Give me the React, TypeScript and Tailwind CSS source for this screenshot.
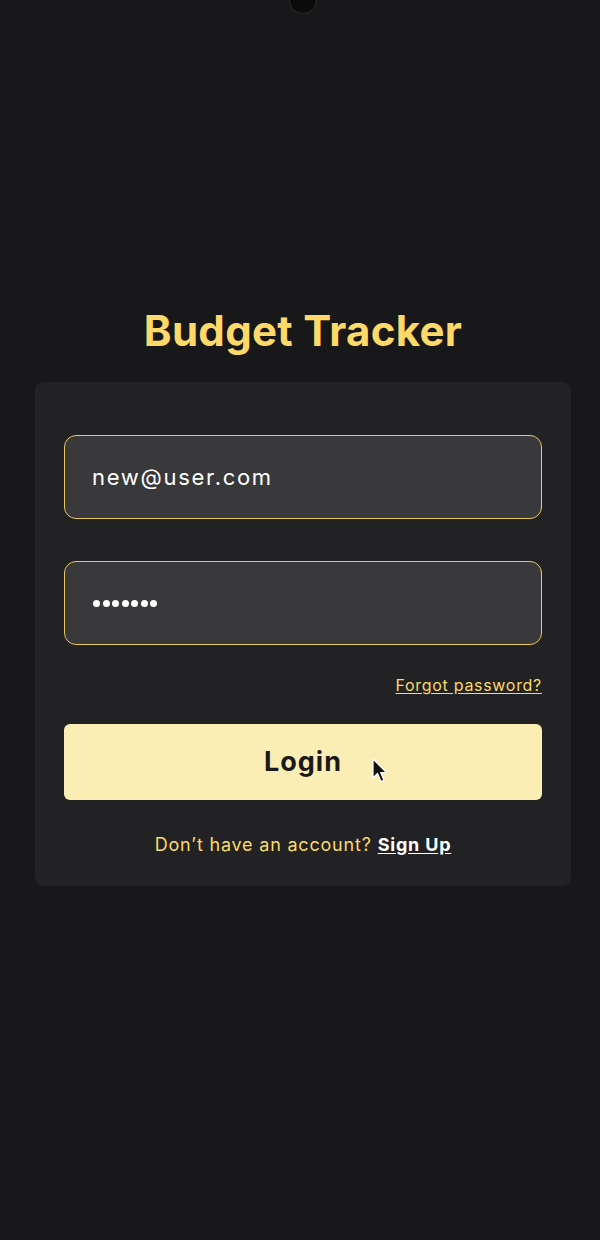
export default function App() {
  const font = { fontFamily: '"Inter", "Liberation Sans", sans-serif' };
  return (
    <div className="relative w-[600px] h-[1240px] bg-[#18171a] overflow-hidden" style={font}>
      {/* camera notch */}
      <div className="absolute left-[289px] top-[-14px] w-[28px] h-[28px] rounded-full bg-[#0b0b0c] border border-[#2a292c]" />

      <div className="flex flex-col items-center pt-[306px] pl-[6px]">
        <h1 className="text-[42px] leading-[50px] font-bold text-[#fcd969] tracking-[0.3px]">Budget Tracker</h1>

        <div className="mt-[26px] w-[536px] rounded-[8px] bg-[#222124] px-[29px] pt-[53px] pb-[30px]">
          <div className="h-[84px] rounded-[12px] border border-[#e9c95c] bg-[#39383b] flex items-center px-[27px]">
            <span className="text-[22px] text-white tracking-[1.7px]">new@user.com</span>
          </div>

          <div className="mt-[42px] h-[84px] rounded-[12px] border border-[#e9c95c] bg-[#39383b] flex items-center px-[28px]">
            <div className="flex gap-[2.5px]">
              {[0, 1, 2, 3, 4, 5, 6].map((i) => (
                <span key={i} className="w-[7px] h-[7px] rounded-full bg-white" />
              ))}
            </div>
          </div>

          <div className="mt-[28px] flex justify-end">
            <span className="text-[16px] text-[#fcd969] tracking-[0.7px] underline underline-offset-2">Forgot password?</span>
          </div>

          <div className="relative mt-[27px] h-[76px] rounded-[6px] bg-[#fbeeb5] flex items-center justify-center">
            <span className="text-[27px] font-bold text-[#1a191b] tracking-[1px]">Login</span>
            {/* mouse pointer */}
            <svg className="absolute left-[308px] top-[34px]" width="16" height="26" viewBox="0 0 16 26">
              <path d="M1 1 L1 20 L5.5 15.5 L9 23.5 L12 22.2 L8.6 14.5 L14.5 14.5 Z" fill="#111" stroke="#fff" strokeWidth="1.2" strokeLinejoin="round" />
            </svg>
          </div>

          <div className="mt-[34px] flex justify-center text-[18px] leading-[22px] tracking-[0.8px]">
            <span className="text-[#fcd969]">Don’t have an account?</span>
            <span className="ml-[6px] text-white font-bold underline underline-offset-2">Sign Up</span>
          </div>
        </div>
      </div>
    </div>
  );
}
